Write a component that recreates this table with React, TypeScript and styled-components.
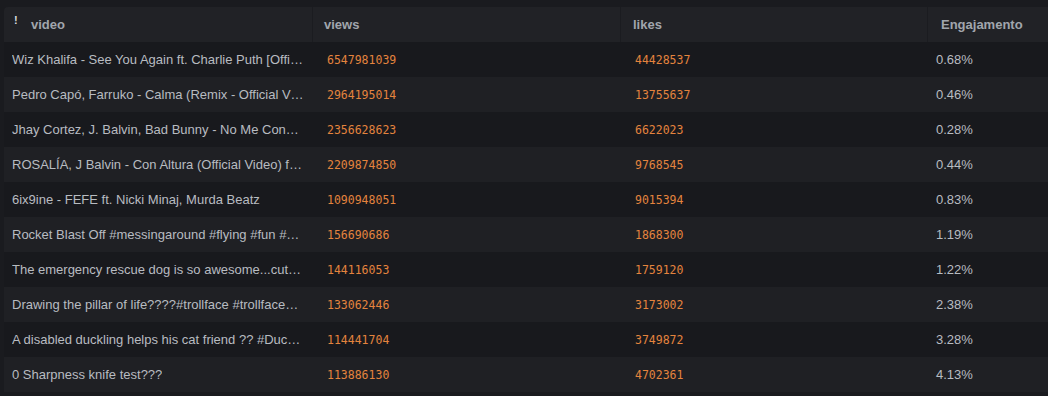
import React from "react";
import styled, { createGlobalStyle } from "styled-components";

const Global = createGlobalStyle`
  html, body {
    margin: 0;
    padding: 0;
    background: #1a1b1f;
    overflow: hidden;
  }
  body {
    font-family: "Liberation Sans", Arial, sans-serif;
  }
`;

const Page = styled.div`
  width: 1048px;
  height: 396px;
  padding: 7px 0 0 4px;
  box-sizing: border-box;
  background: #1a1b1f;
`;

const Table = styled.div`
  display: grid;
  grid-template-columns: 308px 308px 307px 1fr;
  border-top-left-radius: 4px;
  overflow: hidden;
`;

const HeadCell = styled.div<{ $pad: number; $divider?: boolean }>`
  height: 35px;
  display: flex;
  align-items: center;
  gap: 14px;
  padding-left: ${(p) => p.$pad}px;
  background: #212226;
  color: #a1a6ad;
  font-size: 13px;
  font-weight: 700;
  border-left: ${(p) => (p.$divider ? "1px solid #1b1c20" : "none")};
  box-sizing: border-box;
  white-space: nowrap;
`;

const Bang = styled.span`
  color: #d6d9dd;
  font-size: 11px;
  font-weight: 900;
  position: relative;
  top: -5px;
  width: 3px;
  display: inline-block;
`;

const Cell = styled.div<{ $odd: boolean; $pad: number; $kind: "text" | "num" | "pct" }>`
  height: 35px;
  display: flex;
  align-items: center;
  padding: 0 8px 0 ${(p) => p.$pad}px;
  box-sizing: border-box;
  background: ${(p) => (p.$odd ? "#18191d" : "#1f2024")};
  color: ${(p) => (p.$kind === "num" ? "#e4843e" : "#b8bcc1")};
  font-family: ${(p) =>
    p.$kind === "num" ? '"DejaVu Sans Mono", "Liberation Mono", monospace' : '"Liberation Sans", Arial, sans-serif'};
  font-size: ${(p) => (p.$kind === "num" ? "11.5px" : "13px")};
  min-width: 0;
`;

const Ellipsis = styled.span`
  display: block;
  white-space: nowrap;
  overflow: hidden;
  text-overflow: ellipsis;
  min-width: 0;
`;

const rows: [string, string, string, string][] = [
  ["Wiz Khalifa - See You Again ft. Charlie Puth [Offi…", "6547981039", "44428537", "0.68%"],
  ["Pedro Capó, Farruko - Calma (Remix - Official V…", "2964195014", "13755637", "0.46%"],
  ["Jhay Cortez, J. Balvin, Bad Bunny - No Me Con…", "2356628623", "6622023", "0.28%"],
  ["ROSALÍA, J Balvin - Con Altura (Official Video) f…", "2209874850", "9768545", "0.44%"],
  ["6ix9ine - FEFE ft. Nicki Minaj, Murda Beatz", "1090948051", "9015394", "0.83%"],
  ["Rocket Blast Off #messingaround #flying #fun #…", "156690686", "1868300", "1.19%"],
  ["The emergency rescue dog is so awesome...cut…", "144116053", "1759120", "1.22%"],
  ["Drawing the pillar of life????#trollface #trollface…", "133062446", "3173002", "2.38%"],
  ["A disabled duckling helps his cat friend ?? #Duc…", "114441704", "3749872", "3.28%"],
  ["0 Sharpness knife test???", "113886130", "4702361", "4.13%"],
];

export default function App() {
  return (
    <>
      <Global />
      <Page>
        <Table>
          <HeadCell $pad={10}>
            <Bang>!</Bang>
            <span>video</span>
          </HeadCell>
          <HeadCell $pad={11} $divider>views</HeadCell>
          <HeadCell $pad={12} $divider>likes</HeadCell>
          <HeadCell $pad={13} $divider>Engajamento</HeadCell>
          {rows.map((r, i) => {
            const odd = i % 2 === 0;
            return (
              <React.Fragment key={i}>
                <Cell $odd={odd} $pad={8} $kind="text">
                  <Ellipsis>{r[0]}</Ellipsis>
                </Cell>
                <Cell $odd={odd} $pad={15} $kind="num">{r[1]}</Cell>
                <Cell $odd={odd} $pad={15} $kind="num">{r[2]}</Cell>
                <Cell $odd={odd} $pad={9} $kind="pct">{r[3]}</Cell>
              </React.Fragment>
            );
          })}
        </Table>
      </Page>
    </>
  );
}
